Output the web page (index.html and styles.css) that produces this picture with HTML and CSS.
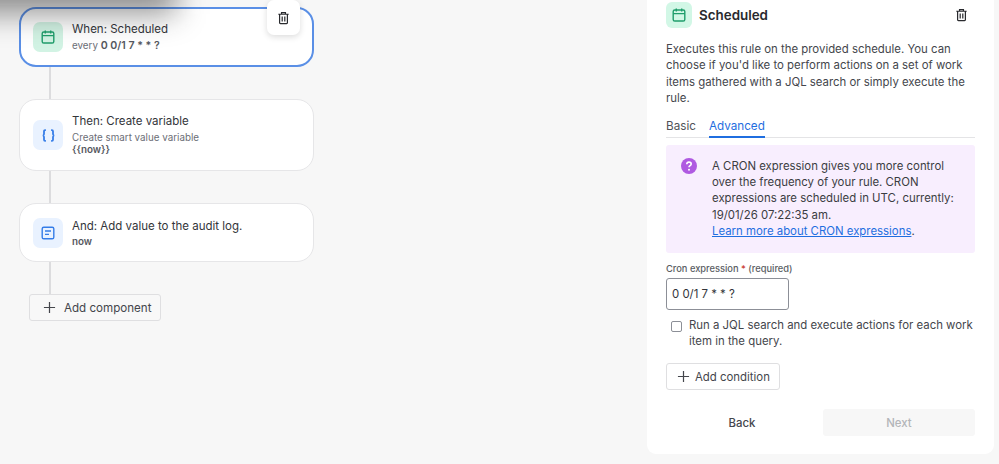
FILE: index.html
```html
<!DOCTYPE html>
<html lang="en">
<head>
<meta charset="utf-8">
<title>Scheduled rule</title>
<link rel="stylesheet" href="styles.css">
</head>
<body>
<div class="page">
  <main class="canvas">
    <section class="card card-active">
      <div class="tile tile-green">
        <svg class="ico" viewBox="0 0 16 16" fill="none" stroke="#1f9d6b" stroke-width="1.4"><rect x="2.2" y="3" width="11.6" height="11" rx="1.6"/><path d="M2.2 6.6h11.6M5.3 1.4v3M10.7 1.4v3"/></svg>
      </div>
      <div class="card-text card-text-lift">
        <div class="card-title">When: Scheduled</div>
        <div class="card-sub">every <b>0 0/1 7 * * ?</b></div>
      </div>
      <div class="float-del">
        <svg class="trash" viewBox="0 0 16 16" fill="none" stroke="#292a2e" stroke-width="1.5"><path d="M1.6 3.4h12.8M5.6 3.2V1.4h4.8v1.8M3.2 3.4v10.4c0 .6.4 1 1 1h7.6c.6 0 1-.4 1-1V3.4M6.4 6v6.2M9.6 6v6.2"/></svg>
      </div>
    </section>
    <div class="link link-a"></div>
    <section class="card card-tall">
      <div class="tile tile-blue">
        <svg class="ico ico-brace" viewBox="0 0 16 16" fill="none" stroke="#357de8" stroke-width="1.9"><path d="M5.2 2.2H4.4c-.8 0-1.2.4-1.2 1.2v3c0 .9-.4 1.4-1.2 1.6.8.2 1.2.7 1.2 1.6v3c0 .8.4 1.2 1.2 1.2h.8M10.8 2.2h.8c.8 0 1.2.4 1.2 1.2v3c0 .9.4 1.4 1.2 1.6-.8.2-1.2.7-1.2 1.6v3c0 .8-.4 1.2-1.2 1.2h-.8"/></svg>
      </div>
      <div class="card-text card-text-lift2">
        <div class="card-title">Then: Create variable</div>
        <div class="card-sub">Create smart value variable</div>
        <div class="card-val">{{now}}</div>
      </div>
    </section>
    <div class="link link-b"></div>
    <section class="card">
      <div class="tile tile-blue">
        <svg class="ico" viewBox="0 0 16 16" fill="none" stroke="#357de8" stroke-width="1.4"><rect x="2.2" y="2.2" width="11.6" height="11.6" rx="1.6"/><path d="M5 6h6M5 9.4h4"/></svg>
      </div>
      <div class="card-text">
        <div class="card-title">And: Add value to the audit log.</div>
        <div class="card-val card-val-now">now</div>
      </div>
    </section>
    <div class="link link-c"></div>
    <button class="btn btn-component" type="button">
      <svg class="plus" viewBox="0 0 14 14" fill="none" stroke="#44464c" stroke-width="1.3"><path d="M7 1v12M1 7h12"/></svg>
      Add component
    </button>
  </main>
  <aside class="panel">
    <header class="panel-head">
      <div class="head-tile">
        <svg class="ico" viewBox="0 0 16 16" fill="none" stroke="#1f9d6b" stroke-width="1.4"><rect x="2.2" y="3" width="11.6" height="11" rx="1.6"/><path d="M2.2 6.6h11.6M5.3 1.4v3M10.7 1.4v3"/></svg>
      </div>
      <h1 class="panel-title">Scheduled</h1>
      <svg class="trash trash-head" viewBox="0 0 16 16" fill="none" stroke="#292a2e" stroke-width="1.5"><path d="M1.6 3.4h12.8M5.6 3.2V1.4h4.8v1.8M3.2 3.4v10.4c0 .6.4 1 1 1h7.6c.6 0 1-.4 1-1V3.4M6.4 6v6.2M9.6 6v6.2"/></svg>
    </header>
    <p class="desc">Executes this rule on the provided schedule. You can choose if you'd like to perform actions on a set of work items gathered with a JQL search or simply execute the rule.</p>
    <nav class="tabs">
      <span class="tab">Basic</span>
      <span class="tab tab-on">Advanced</span>
    </nav>
    <div class="notice">
      <svg class="help" viewBox="0 0 16 16"><circle cx="8" cy="8" r="8" fill="#af59e1"/><path d="M5.8 6.2c0-1.3 1-2.1 2.2-2.1s2.2.8 2.2 1.9c0 1.7-2.2 1.6-2.2 3.3" fill="none" stroke="#fff" stroke-width="1.6"/><circle cx="8" cy="11.7" r="1" fill="#fff"/></svg>
      <p class="notice-text">A CRON expression gives you more control over the frequency of your rule. CRON expressions are scheduled in UTC, currently: 19/01/26 07:22:35 am.<br><a class="notice-link" href="#">Learn more about CRON expressions</a>.</p>
    </div>
    <label class="field-label" for="cron">Cron expression <span class="req">*</span> (required)</label>
    <input class="cron" id="cron" type="text" value="0 0/1 7 * * ?">
    <label class="check">
      <span class="box"></span>
      <span class="check-text">Run a JQL search and execute actions for each work item in the query.</span>
    </label>
    <button class="btn btn-condition" type="button">
      <svg class="plus" viewBox="0 0 14 14" fill="none" stroke="#44464c" stroke-width="1.3"><path d="M7 1v12M1 7h12"/></svg>
      Add condition
    </button>
    <footer class="actions">
      <button class="act act-back" type="button">Back</button>
      <button class="act act-next" type="button">Next</button>
    </footer>
  </aside>
  <div class="drag-shadow"></div>
</div>
</body>
</html>
```
FILE: styles.css
```css
* { box-sizing: border-box; }
html, body { margin: 0; height: 100%; }
body {
  background: #f7f7f7;
  font-family: Inter, "Noto Sans", sans-serif;
  color: #3b3d42;
  font-size: 11.4px;
  overflow: hidden;
}
.page {
  position: relative;
  width: 999px;
  height: 464px;
  display: flex;
  justify-content: space-between;
  padding-right: 5px;
}
.drag-shadow {
  position: absolute;
  left: -50px;
  top: -44px;
  width: 226px;
  height: 58px;
  background: rgba(20, 20, 20, 0.46);
  filter: blur(15px);
  pointer-events: none;
}
.canvas {
  position: relative;
  width: 314px;
  margin-left: 19px;
  padding-top: 7px;
  display: flex;
  flex-direction: column;
  align-items: flex-start;
}
.card {
  position: relative;
  width: 295px;
  height: 59px;
  background: #fff;
  border: 1px solid #e6e6e8;
  border-radius: 17px;
  display: flex;
  align-items: center;
  padding-left: 13px;
  gap: 9px;
}
.card-active {
  border: 2px solid #5a8fe6;
  height: 60px;
  padding-left: 12px;
}
.card-tall { height: 72px; }
.tile {
  width: 30px;
  height: 30px;
  border-radius: 7px;
  display: flex;
  align-items: center;
  justify-content: center;
  flex: none;
}
.tile-green { background: #d2f3e4; }
.tile-blue { background: #e9f2ff; }
.ico { width: 16px; height: 16px; }
.ico-brace { width: 15px; height: 15px; }
.card-title { font-size: 11.5px; line-height: 16px; color: #33353a; }
.card-sub { font-size: 9.8px; line-height: 13px; color: #6b6e76; margin-top: 2px; }
.card-sub b { font-weight: 600; color: #55585e; font-size: 10.6px; }
.card-val { font-size: 9.8px; font-weight: 600; color: #55585e; line-height: 12px; }
.card-val-now { margin-top: 2px; }
.card-text-lift { padding-bottom: 1px; }
.card-text-lift2 { padding-bottom: 2px; }
.float-del {
  position: absolute;
  right: 12px;
  top: -9px;
  width: 33px;
  height: 35px;
  background: #fff;
  border-radius: 7px;
  box-shadow: 0 2px 6px rgba(0,0,0,0.14);
  display: flex;
  align-items: center;
  justify-content: center;
}
.trash { width: 13px; height: 14px; }
.link { width: 2px; margin-left: 30px; background: #dcdcde; }
.link-a { height: 32px; }
.link-b { height: 32px; }
.link-c { height: 32px; }
.btn {
  background: #fff;
  border: 1px solid #dfdfe1;
  border-radius: 3px;
  font: inherit;
  color: #44464c;
  display: flex;
  align-items: center;
  height: 27px;
}
.btn-component {
  width: 132px;
  margin-left: 10px;
  padding: 0 0 0 13px;
  gap: 8px;
  font-size: 11.6px;
  background: #f8f8f8;
}
.plus { width: 13px; height: 13px; flex: none; }
.panel {
  width: 347px;
  height: 454px;
  background: #fff;
  border-radius: 0 0 9px 9px;
  padding: 1px 19px 0;
  display: flex;
  flex-direction: column;
  align-items: flex-start;
}
.panel-head {
  width: 100%;
  display: flex;
  align-items: center;
  height: 27px;
}
.head-tile {
  width: 26px;
  height: 26px;
  border-radius: 6px;
  background: #d2f7e6;
  display: flex;
  align-items: center;
  justify-content: center;
}
.panel-title { margin: 0 0 0 7px; font-size: 13.4px; font-weight: 600; color: #292a2e; flex: 1; }
.trash-head { margin-right: 7px; }
.desc {
  margin: 13px 0 0;
  line-height: 16.4px;
  color: #44464c;
  width: 100%;
}
.tabs {
  width: 100%;
  display: flex;
  gap: 13px;
  border-bottom: 1px solid #e4e4e6;
  margin-top: 11px;
  height: 20px;
  font-size: 11.7px;
}
.tab { color: #505258; line-height: 16px; height: 20px; }
.tab-on { color: #1f6ee0; border-bottom: 2px solid #1f6ee0; }
.notice {
  width: 100%;
  margin-top: 7px;
  height: 108px;
  background: #f8eefe;
  border-radius: 3px;
  display: flex;
  padding: 13px 16px 0 15px;
  gap: 15px;
}
.help { width: 16px; height: 16px; flex: none; }
.notice-text { margin: 0; line-height: 16.4px; color: #3b3d42; }
.notice-link { color: #1f6ee0; text-decoration: underline; }
.field-label {
  margin-top: 9px;
  font-size: 9.3px;
  line-height: 13px;
  font-weight: 500;
  color: #5a5d63;
}
.req { color: #c9372c; }
.cron {
  margin-top: 3px;
  width: 123px;
  height: 32px;
  border: 1px solid #8c8f97;
  border-radius: 3px;
  font: 11.4px Inter, sans-serif;
  color: #33353a;
  padding: 1px 5px 0;
  background: #fff;
}
.check {
  display: flex;
  gap: 7px;
  margin-top: 7px;
  padding-left: 5px;
  line-height: 16.4px;
  color: #44464c;
}
.check-text { width: 286px; flex: none; }
.box {
  flex: none;
  width: 11px;
  height: 11px;
  margin-top: 4px;
  border: 1px solid #8c8f97;
  border-radius: 2px;
  background: #fff;
}
.btn-condition {
  margin-top: 14px;
  width: 114px;
  padding: 0 0 0 10px;
  gap: 5px;
}
.actions {
  width: 100%;
  display: flex;
  margin-top: 19px;
  justify-content: space-between;
}
.act {
  width: 152px;
  height: 27px;
  border: 0;
  border-radius: 3px;
  font: 500 11.4px Inter, sans-serif;
  background: transparent;
  color: #44464c;
}
.act-next { background: #f7f7f7; color: #b3b5b9; }
```
